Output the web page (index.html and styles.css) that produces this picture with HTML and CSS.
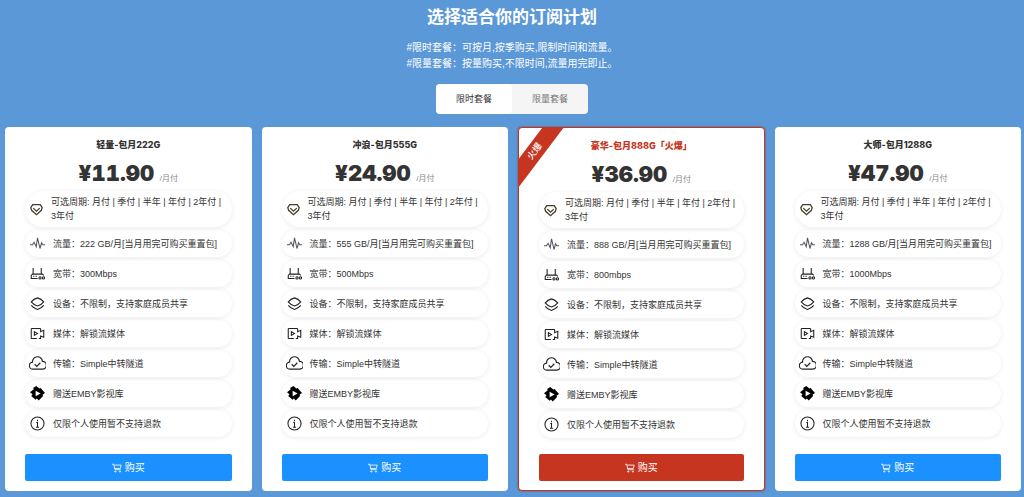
FILE: index.html
```html
<!DOCTYPE html>
<html lang="zh-CN">
<head>
<meta charset="utf-8">
<title>选择适合你的订阅计划</title>
<link rel="stylesheet" href="styles.css">
</head>
<body>
<svg class="sprite" aria-hidden="true">
  <symbol id="i-gem" viewBox="0 0 24 24"><path d="M5 3h14l3.500 5.500-1.500 5-9 8-9-8-1.500-5z"/><path d="M6 9.500l6 5.500 6-5.500"/></symbol>
  <symbol id="i-pulse" viewBox="0 0 24 24"><path d="M0 14h4l2.500-4L10 17l2-14 4 17 2.500-9 2 3H24"/></symbol>
  <symbol id="i-router" viewBox="0 0 24 24"><path d="M5 3v10M18 3v10M12 20H2v-5l2-2h16l2 2M5 16.500h2M9 16.500h2"/><circle cx="16" cy="19" r="1.800"/><circle cx="21.500" cy="19" r="1.800"/></symbol>
  <symbol id="i-layers" viewBox="0 0 24 24"><path d="M12 3q6 1.500 10 6.500-4 5-10 6.500-6-1.500-10-6.500Q6 4.500 12 3zM2 15q4 5 10 6.500 6-1.500 10-6.500"/></symbol>
  <symbol id="i-video" viewBox="0 0 24 24"><path d="M11 20H3a1 1 0 0 1-1-1V5a1 1 0 0 1 1-1h13a1 1 0 0 1 1 1v4l5-2v11l-5-2v4h-3"/><path d="M7 9v6l5-3z"/></symbol>
  <symbol id="i-cloud" viewBox="0 0 24 24"><path d="M6 20a5 5 0 0 1-1-10 7 7 0 0 1 14-1 5.500 5.500 0 0 1 0 11z"/><path d="M8 13l3 3 5-5"/></symbol>
  <symbol id="i-emby" viewBox="0 0 24 24"><path class="solid" d="M10 0l5 4 2-1 7 8-4 3 1 2-7 7-3-3-2 2-7-6 2-3-4-3 6-5-1-2z"/><path class="cutout" d="M9 7.500l8 4.500-8 4.500z"/></symbol>
  <symbol id="i-info" viewBox="0 0 24 24"><circle cx="12" cy="12" r="10.500"/><path d="M10 10.500h2V18M9.500 18h5M12 6v2.500"/></symbol>
  <symbol id="i-cart" viewBox="0 0 24 24"><path d="M0 3h4l3 13h14M5 5h17l-2 8H7"/><circle cx="8" cy="20.500" r="1.500"/><circle cx="19" cy="20.500" r="1.500"/></symbol>
</svg>

<header class="intro">
  <h1 class="intro-title">选择适合你的订阅计划</h1>
  <p class="intro-text">#限时套餐：可按月,按季购买,限制时间和流量。<br>#限量套餐：按量购买,不限时间,流量用完即止。</p>
  <div class="switch">
    <button class="switch-item active" type="button">限时套餐</button>
    <button class="switch-item" type="button">限量套餐</button>
  </div>
</header>

<main class="plans">
  <article class="card">
    <h2 class="name">轻量-包月222G</h2>
    <p class="price"><strong class="amount">¥11.90</strong> <span class="unit">/月付</span></p>
    <ul class="features">
      <li class="feature periods"><svg class="icon gem"><use href="#i-gem"/></svg><span>可选周期: 月付 | 季付 | 半年 | 年付 | 2年付 | 3年付</span></li>
      <li class="feature"><svg class="icon pulse"><use href="#i-pulse"/></svg><span>流量：222 GB/月[当月用完可购买重置包]</span></li>
      <li class="feature"><svg class="icon"><use href="#i-router"/></svg><span>宽带：300Mbps</span></li>
      <li class="feature"><svg class="icon"><use href="#i-layers"/></svg><span>设备：不限制，支持家庭成员共享</span></li>
      <li class="feature"><svg class="icon"><use href="#i-video"/></svg><span>媒体：解锁流媒体</span></li>
      <li class="feature"><svg class="icon wide"><use href="#i-cloud"/></svg><span>传输：Simple中转隧道</span></li>
      <li class="feature"><svg class="icon"><use href="#i-emby"/></svg><span>赠送EMBY影视库</span></li>
      <li class="feature"><svg class="icon"><use href="#i-info"/></svg><span>仅限个人使用暂不支持退款</span></li>
    </ul>
    <button class="buy" type="button"><svg class="cart"><use href="#i-cart"/></svg>购买</button>
  </article>

  <article class="card">
    <h2 class="name">冲浪-包月555G</h2>
    <p class="price"><strong class="amount">¥24.90</strong> <span class="unit">/月付</span></p>
    <ul class="features">
      <li class="feature periods"><svg class="icon gem"><use href="#i-gem"/></svg><span>可选周期: 月付 | 季付 | 半年 | 年付 | 2年付 | 3年付</span></li>
      <li class="feature"><svg class="icon pulse"><use href="#i-pulse"/></svg><span>流量：555 GB/月[当月用完可购买重置包]</span></li>
      <li class="feature"><svg class="icon"><use href="#i-router"/></svg><span>宽带：500Mbps</span></li>
      <li class="feature"><svg class="icon"><use href="#i-layers"/></svg><span>设备：不限制，支持家庭成员共享</span></li>
      <li class="feature"><svg class="icon"><use href="#i-video"/></svg><span>媒体：解锁流媒体</span></li>
      <li class="feature"><svg class="icon wide"><use href="#i-cloud"/></svg><span>传输：Simple中转隧道</span></li>
      <li class="feature"><svg class="icon"><use href="#i-emby"/></svg><span>赠送EMBY影视库</span></li>
      <li class="feature"><svg class="icon"><use href="#i-info"/></svg><span>仅限个人使用暂不支持退款</span></li>
    </ul>
    <button class="buy" type="button"><svg class="cart"><use href="#i-cart"/></svg>购买</button>
  </article>

  <article class="card hot">
    <span class="ribbon">火爆</span>
    <h2 class="name">豪华-包月888G「火爆」</h2>
    <p class="price"><strong class="amount">¥36.90</strong> <span class="unit">/月付</span></p>
    <ul class="features">
      <li class="feature periods"><svg class="icon gem"><use href="#i-gem"/></svg><span>可选周期: 月付 | 季付 | 半年 | 年付 | 2年付 | 3年付</span></li>
      <li class="feature"><svg class="icon pulse"><use href="#i-pulse"/></svg><span>流量：888 GB/月[当月用完可购买重置包]</span></li>
      <li class="feature"><svg class="icon"><use href="#i-router"/></svg><span>宽带：800mbps</span></li>
      <li class="feature"><svg class="icon"><use href="#i-layers"/></svg><span>设备：不限制，支持家庭成员共享</span></li>
      <li class="feature"><svg class="icon"><use href="#i-video"/></svg><span>媒体：解锁流媒体</span></li>
      <li class="feature"><svg class="icon wide"><use href="#i-cloud"/></svg><span>传输：Simple中转隧道</span></li>
      <li class="feature"><svg class="icon"><use href="#i-emby"/></svg><span>赠送EMBY影视库</span></li>
      <li class="feature"><svg class="icon"><use href="#i-info"/></svg><span>仅限个人使用暂不支持退款</span></li>
    </ul>
    <button class="buy" type="button"><svg class="cart"><use href="#i-cart"/></svg>购买</button>
  </article>

  <article class="card">
    <h2 class="name">大师-包月1288G</h2>
    <p class="price"><strong class="amount">¥47.90</strong> <span class="unit">/月付</span></p>
    <ul class="features">
      <li class="feature periods"><svg class="icon gem"><use href="#i-gem"/></svg><span>可选周期: 月付 | 季付 | 半年 | 年付 | 2年付 | 3年付</span></li>
      <li class="feature"><svg class="icon pulse"><use href="#i-pulse"/></svg><span>流量：1288 GB/月[当月用完可购买重置包]</span></li>
      <li class="feature"><svg class="icon"><use href="#i-router"/></svg><span>宽带：1000Mbps</span></li>
      <li class="feature"><svg class="icon"><use href="#i-layers"/></svg><span>设备：不限制，支持家庭成员共享</span></li>
      <li class="feature"><svg class="icon"><use href="#i-video"/></svg><span>媒体：解锁流媒体</span></li>
      <li class="feature"><svg class="icon wide"><use href="#i-cloud"/></svg><span>传输：Simple中转隧道</span></li>
      <li class="feature"><svg class="icon"><use href="#i-emby"/></svg><span>赠送EMBY影视库</span></li>
      <li class="feature"><svg class="icon"><use href="#i-info"/></svg><span>仅限个人使用暂不支持退款</span></li>
    </ul>
    <button class="buy" type="button"><svg class="cart"><use href="#i-cart"/></svg>购买</button>
  </article>
</main>
</body>
</html>
```
FILE: styles.css
```css
* {
  box-sizing: border-box;
}

body {
  margin: 0;
  background: #5b98d7;
  color: #333;
  font: 9px/14px "Liberation Sans", "Noto Sans CJK SC", sans-serif;
}

h1, h2, p, ul {
  margin: 0;
  padding: 0;
}

button {
  border: 0;
  font: inherit;
  cursor: pointer;
}

.sprite {
  display: none;
}

.intro {
  display: flex;
  flex-direction: column;
  align-items: center;
  padding-top: 6px;
  color: #fff;
  text-align: center;
}

.intro-title {
  font-size: 17px;
  line-height: 24px;
}

.intro-text {
  margin-top: 10px;
  font-size: 10px;
  line-height: 16px;
}

.switch {
  display: flex;
  margin-top: 12px;
  border-radius: 4px;
  background: #f5f5f5;
  overflow: hidden;
}

.switch-item {
  padding: 8px 20px;
  border-radius: 4px;
  background: transparent;
  color: #777;
}

.switch-item.active {
  background: #fff;
  color: #333;
}

.plans {
  display: grid;
  grid-template-columns: repeat(4, minmax(0, 1fr));
  gap: 10px;
  padding: 13px 3px 5px 5px;
}

.card {
  position: relative;
  display: flex;
  flex-direction: column;
  padding: 11px 20px 10px;
  border-radius: 4px;
  background: #fff;
  overflow: hidden;
}

.card.hot {
  padding-bottom: 9px;
  border: 1px solid #c53520;
  box-shadow: 0 0 2px #7c3541;
}

.ribbon {
  position: absolute;
  top: 15px;
  left: -34px;
  width: 100px;
  background: #c53520;
  color: #fff;
  font-weight: 500;
  line-height: 17px;
  text-align: center;
  transform: rotate(-53deg);
}

.name {
  font-family: Inter, "Noto Sans CJK SC", sans-serif;
  font-size: 9px;
  font-weight: 800;
  text-align: center;
}

.hot .name {
  color: #c53520;
}

.price {
  margin-top: 9px;
  line-height: 25px;
  text-align: center;
}

.amount {
  font-family: Inter, "Noto Sans CJK SC", sans-serif;
  font-size: 22px;
  font-weight: 900;
  font-variant-numeric: tabular-nums;
}

.unit {
  margin-left: 3px;
  color: #888;
  font-size: 8px;
}

.features {
  display: grid;
  gap: 3px;
  list-style: none;
}

.feature {
  display: flex;
  align-items: center;
  gap: 8px;
  min-height: 27px;
  padding: 0 4px 0 5px;
  border-radius: 18px;
  box-shadow: 0 1px 5px rgba(0, 0, 0, 0.08);
}

.periods {
  padding-top: 4px;
  padding-bottom: 4px;
}

.icon {
  flex: none;
  width: 15px;
  height: 15px;
  fill: none;
  stroke: #222;
  stroke-width: 1.7;
}

.icon.gem {
  width: 13px;
  height: 13px;
  stroke: #4a3a28;
  stroke-width: 2.4;
}

.icon.pulse {
  stroke: #556;
}

.icon.wide {
  width: 17px;
  height: 17px;
  margin: 0 -1px;
}

.solid {
  fill: #000;
  stroke: none;
}

.cutout {
  fill: #fff;
  stroke: none;
}

.buy {
  display: flex;
  align-items: center;
  justify-content: center;
  gap: 3px;
  min-height: 27px;
  margin-top: 17px;
  border-radius: 2px;
  background: #1b90ff;
  color: #fff;
  font-size: 10px;
}

.hot .buy {
  margin-top: 16px;
  background: #c53520;
}

.cart {
  width: 10px;
  height: 10px;
  fill: none;
  stroke: #fff;
  stroke-width: 2;
}
```
